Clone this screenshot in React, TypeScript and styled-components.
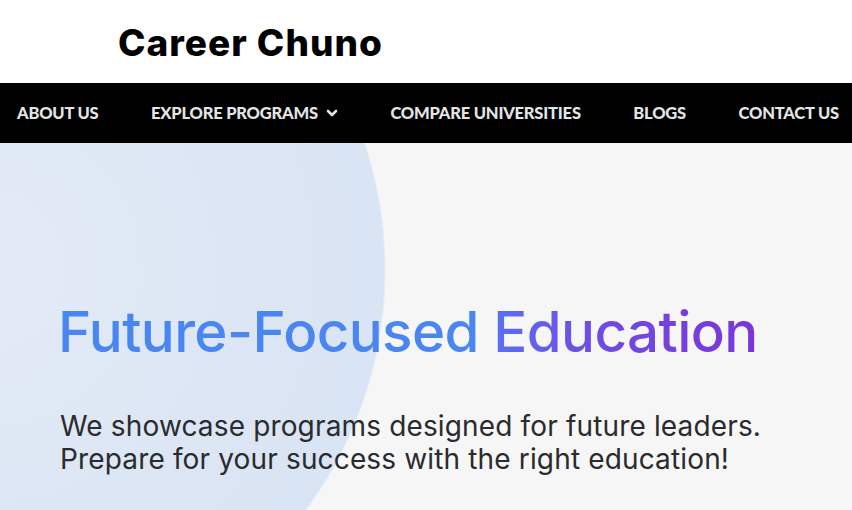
import React from "react";
import styled, { createGlobalStyle } from "styled-components";

const GlobalStyle = createGlobalStyle`
  html, body {
    margin: 0;
    padding: 0;
    background: #ffffff;
  }
  body {
    width: 852px;
    height: 510px;
    overflow: hidden;
    font-family: Inter, "Liberation Sans", sans-serif;
  }
`;

const Page = styled.div`
  display: flex;
  flex-direction: column;
  width: 852px;
  height: 510px;
`;

const Header = styled.header`
  height: 83px;
  display: flex;
  align-items: center;
  padding-left: 118px;
  background: #ffffff;
`;

const Logo = styled.div`
  font-family: Inter, "Liberation Sans", sans-serif;
  font-weight: 800;
  font-size: 37px;
  letter-spacing: 1px;
  color: #000;
  margin-top: 2px;
`;

const NavBar = styled.nav`
  height: 60px;
  background: #000;
  display: flex;
  align-items: center;
  justify-content: space-between;
  padding: 0 13px 0 17px;
`;

const NavItem = styled.a`
  display: flex;
  align-items: center;
  gap: 8px;
  font-family: Lato, "Liberation Sans", sans-serif;
  font-weight: 900;
  font-size: 16.5px;
  letter-spacing: -0.2px;
  color: #e4e4e4;
  text-decoration: none;
  white-space: nowrap;
`;

const Hero = styled.section`
  flex: 1;
  display: flex;
  flex-direction: column;
  padding: 157px 0 0 58px;
  background: radial-gradient(
    circle 404px at -18px 127px,
    #e3ebf7 0px,
    #dde6f4 250px,
    #d9e4f4 402px,
    #f6f6f6 404px
  );
`;

const Title = styled.h1`
  margin: 0;
  font-family: Inter, "Liberation Sans", sans-serif;
  font-weight: 500;
  font-size: 56.5px;
  line-height: 64px;
  letter-spacing: -0.6px;
  color: #4a86f1;
  white-space: nowrap;
`;

const Accent = styled.span`
  background: linear-gradient(90deg, #5a6ff2 0%, #6f4be3 40%, #7c35d9 100%);
  -webkit-background-clip: text;
  background-clip: text;
  color: transparent;
`;

const Subtitle = styled.p`
  margin: 46px 0 0 2px;
  font-family: Inter, "Liberation Sans", sans-serif;
  font-weight: 400;
  font-size: 28px;
  line-height: 33px;
  letter-spacing: 0.15px;
  color: #2a2b2e;
  white-space: nowrap;
`;

const Chevron = () => (
  <svg width="12" height="12" viewBox="0 0 12 12" fill="none">
    <path
      d="M2 4l4 4 4-4"
      stroke="#e4e4e4"
      strokeWidth="2.6"
      strokeLinecap="round"
      strokeLinejoin="round"
    />
  </svg>
);

const navLinks = [
  { label: "ABOUT US" },
  { label: "EXPLORE PROGRAMS", dropdown: true },
  { label: "COMPARE UNIVERSITIES" },
  { label: "BLOGS" },
  { label: "CONTACT US" },
];

export default function App() {
  return (
    <Page>
      <GlobalStyle />
      <Header>
        <Logo>Career Chuno</Logo>
      </Header>
      <NavBar>
        {navLinks.map((l) => (
          <NavItem key={l.label} href="#">
            {l.label}
            {l.dropdown && <Chevron />}
          </NavItem>
        ))}
      </NavBar>
      <Hero>
        <Title>
          Future-Focused <Accent>Education</Accent>
        </Title>
        <Subtitle>
          We showcase programs designed for future leaders.
          <br />
          Prepare for your success with the right education!
        </Subtitle>
      </Hero>
    </Page>
  );
}
